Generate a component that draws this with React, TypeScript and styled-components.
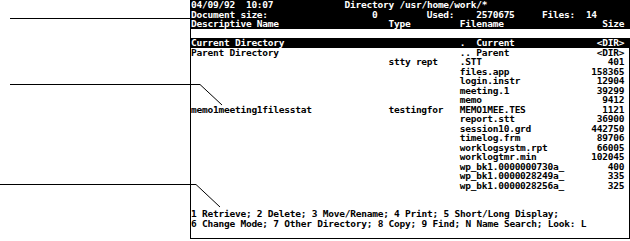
import styled, { createGlobalStyle } from 'styled-components';

const CW = 5.49;
const RH = 9.5;

type FileEntry = {
  desc?: string;
  type?: string;
  name: string;
  size: string;
};

const files: FileEntry[] = [
  { type: 'stty rept', name: '.STT', size: '401' },
  { name: 'files.app', size: '158365' },
  { name: 'login.instr', size: '12904' },
  { name: 'meeting.1', size: '39299' },
  { name: 'memo', size: '9412' },
  { desc: 'memo1meeting1filesstat', type: 'testingfor', name: 'MEMO1MEE.TES', size: '1121' },
  { name: 'report.stt', size: '36900' },
  { name: 'session10.grd', size: '442750' },
  { name: 'timelog.frm', size: '89706' },
  { name: 'worklogsystm.rpt', size: '66005' },
  { name: 'worklogtmr.min', size: '102045' },
  { name: 'wp_bk1.0000000730a_', size: '400' },
  { name: 'wp_bk1.0000028249a_', size: '335' },
  { name: 'wp_bk1.0000028256a_', size: '325' },
];

const GlobalStyle = createGlobalStyle`
  html, body {
    margin: 0;
    padding: 0;
    background: #fff;
  }
`;

export default function App() {
  return (
    <Page>
      <GlobalStyle />
      <Screen>
        <Header>
          <Row>
            <Cell $from={0}>04/09/92  10:07</Cell>
            <Cell $from={28}>Directory /usr/home/work/*</Cell>
          </Row>
          <Row>
            <Cell $from={0}>Document size:</Cell>
            <Cell $from={33}>0</Cell>
            <Cell $from={43}>Used:</Cell>
            <Cell $from={52}>2570675</Cell>
            <Cell $from={64}>Files:</Cell>
            <Cell $from={72}>14</Cell>
          </Row>
          <Row>
            <Cell $from={0}>Descriptive Name</Cell>
            <Cell $from={36}>Type</Cell>
            <Cell $from={49}>Filename</Cell>
            <Cell $to={79}>Size</Cell>
          </Row>
        </Header>
        <Row />
        <List>
          <Row $selected>
            <Cell $from={0}>Current Directory</Cell>
            <Cell $from={49}>.</Cell>
            <Cell $from={52}>Current</Cell>
            <Cell $to={79}>&lt;DIR&gt;</Cell>
          </Row>
          <Row>
            <Cell $from={0}>Parent Directory</Cell>
            <Cell $from={49}>..</Cell>
            <Cell $from={52}>Parent</Cell>
            <Cell $to={79}>&lt;DIR&gt;</Cell>
          </Row>
          {files.map((f) => (
            <Row key={f.name}>
              {f.desc && <Cell $from={0}>{f.desc}</Cell>}
              {f.type && <Cell $from={36}>{f.type}</Cell>}
              <Cell $from={49}>{f.name}</Cell>
              <Cell $to={79}>{f.size}</Cell>
            </Row>
          ))}
          <Row />
          <Row />
          <Row>
            <Cell $from={0}>1 Retrieve; 2 Delete; 3 Move/Rename; 4 Print; 5 Short/Long Display;</Cell>
          </Row>
          <Row>
            <Cell $from={0}>6 Change Mode; 7 Other Directory; 8 Copy; 9 Find; N Name Search; Look: L</Cell>
          </Row>
          <Row />
        </List>
      </Screen>
      <Leaders width="630" height="241" viewBox="0 0 630 241">
        <g stroke="#000" strokeWidth="1" fill="none">
          <path d="M10 18.5H190" shapeRendering="crispEdges" />
          <path d="M10 84.5H200" shapeRendering="crispEdges" />
          <path d="M200 84.5L222 105" />
          <path d="M0 184.5H196" shapeRendering="crispEdges" />
          <path d="M196 184.5L220 207" />
          <path d="M626 46.5H630" shapeRendering="crispEdges" />
        </g>
      </Leaders>
    </Page>
  );
}

const Page = styled.div`
  position: relative;
  width: 630px;
  height: 241px;
  overflow: hidden;
  background: #fff;
`;

const Screen = styled.div`
  margin-left: 190px;
  width: 440px;
  box-sizing: border-box;
  border-left: 1px solid #000;
  font-family: 'DejaVu Sans Mono', 'Liberation Mono', monospace;
  font-weight: bold;
  font-size: 9.5px;
  letter-spacing: -0.23px;
  color: #000;
`;

const Header = styled.div`
  background: #000;
  color: #fff;
`;

const List = styled.div`
  border-right: 1px solid #000;
  border-bottom: 1px solid #000;
`;

const Row = styled.div<{ $selected?: boolean }>`
  display: grid;
  grid-template-columns: repeat(80, ${CW}px);
  height: ${RH}px;
  line-height: ${RH}px;
  background: ${({ $selected }) => ($selected ? '#000' : 'transparent')};
  color: ${({ $selected }) => ($selected ? '#fff' : 'inherit')};
`;

const Cell = styled.span<{ $from?: number; $to?: number }>`
  grid-row: 1;
  grid-column: ${({ $from, $to }) =>
    $to !== undefined ? `${$to - 11} / ${$to + 1}` : `${($from ?? 0) + 1} / span 1`};
  justify-self: ${({ $to }) => ($to !== undefined ? 'end' : 'start')};
  white-space: pre;
`;

const Leaders = styled.svg`
  position: absolute;
  left: 0;
  top: 0;
  pointer-events: none;
`;
